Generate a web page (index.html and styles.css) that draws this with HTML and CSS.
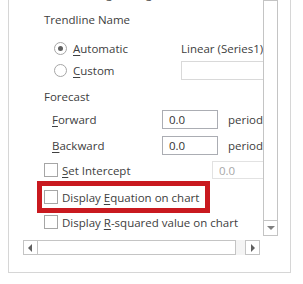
FILE: index.html
```html
<!DOCTYPE html>
<html lang="en">
<head>
    <meta charset="UTF-8">
    <title>Format Trendline</title>
    <link rel="stylesheet" href="styles.css">
</head>
<body>
    <div class="pane">
        <div class="pane-body">
            <div class="viewport">
                <div class="content">
                    <div class="row row-ma">
                        <span class="radio"></span>
                        <span class="label">Moving Average</span>
                    </div>

                    <div class="row row-title">Trendline Name</div>

                    <div class="row row-auto">
                        <span class="radio checked"></span>
                        <span class="label name-label"><u>A</u>utomatic</span>
                        <span>Linear (Series1)</span>
                    </div>
                    <div class="row row-custom">
                        <span class="radio"></span>
                        <span class="label name-label"><u>C</u>ustom</span>
                        <span class="field field-wide"></span>
                    </div>

                    <div class="row row-title row-forecast">Forecast</div>

                    <div class="row row-period">
                        <span class="period-label"><u>F</u>orward</span>
                        <span class="field field-num">0.0</span>
                        <span>periods</span>
                    </div>
                    <div class="row row-period row-back">
                        <span class="period-label"><u>B</u>ackward</span>
                        <span class="field field-num">0.0</span>
                        <span>periods</span>
                    </div>

                    <div class="row row-check row-intercept">
                        <span class="check"></span>
                        <span class="label intercept-label"><u>S</u>et Intercept</span>
                        <span class="field field-off">0.0</span>
                    </div>

                    <div class="row row-check row-equation">
                        <span class="check"></span>
                        <span class="label">Display <u>E</u>quation on chart</span>
                        <span class="highlight"></span>
                    </div>

                    <div class="row row-check row-rsq">
                        <span class="check"></span>
                        <span class="label">Display <u>R</u>-squared value on chart</span>
                    </div>
                </div>
            </div>

            <div class="hscroll">
                <span class="sbtn"><span class="arrow arrow-left"></span></span>
                <span class="hthumb"></span>
                <span class="hgap"></span>
                <span class="sbtn"><span class="arrow arrow-right"></span></span>
            </div>
        </div>

        <div class="vscroll">
            <span class="vthumb"></span>
            <span class="sbtn"><span class="arrow arrow-down"></span></span>
        </div>
    </div>
</body>
</html>
```

FILE: styles.css
```css
body {
    margin: 0;
    background: #fff;
    font-family: "Open Sans", "Noto Sans", sans-serif;
    font-size: 11.5px;
    color: #404040;
}

u {
    text-decoration: underline;
    text-underline-offset: 2px;
}

/* Pane frame */
.pane {
    margin-left: 8px;
    width: 283px;
    height: 273px;
    border-left: 1px solid #d6d6d6;
    border-right: 1px solid #d6d6d6;
    border-bottom: 1px solid #d6d6d6;
    box-sizing: border-box;
    display: flex;
}

.pane-body {
    width: 254px;
    display: flex;
    flex-direction: column;
}

.viewport {
    height: 240px;
    overflow: hidden;
    position: relative;
}

.content {
    padding-left: 35px;
    margin-top: -17px;
    width: 400px;
}

/* Rows */
.row {
    display: flex;
    align-items: center;
    height: 22px;
    white-space: nowrap;
    position: relative;
}

.row-ma {
    height: 20px;
    margin-bottom: 4px;
}

.row-title {
    height: 25px;
}

.row-auto {
    margin-top: 6px;
    height: 21px;
    padding-left: 10px;
}

.row-custom {
    padding-left: 10px;
}

.row-forecast {
    margin-top: 4px;
    height: 22px;
}

.row-period {
    margin-top: 1px;
    padding-left: 8px;
}

.row-back {
    margin-top: 4px;
}

.row-intercept {
    margin-top: 3px;
}

.row-equation {
    margin-top: 5px;
}

.row-rsq {
    margin-top: 3px;
}

.label {
    margin-left: 6px;
}

.name-label {
    width: 108px;
}

.period-label {
    width: 110px;
}

.intercept-label {
    width: 150px;
}

/* Controls */
.radio {
    width: 11px;
    height: 11px;
    border: 1px solid #a6a6a6;
    border-radius: 50%;
    background: #fff;
    box-sizing: content-box;
    position: relative;
    flex: none;
}

.radio.checked::after {
    content: "";
    position: absolute;
    left: 3px;
    top: 3px;
    width: 5px;
    height: 5px;
    border-radius: 50%;
    background: #606060;
}

.row-ma .radio {
    margin-left: 10px;
}

.check {
    width: 12px;
    height: 12px;
    border: 1px solid #a6a6a6;
    background: #fff;
    flex: none;
}

.row-check .label {
    margin-left: 4px;
}

.field {
    height: 19px;
    box-sizing: border-box;
    border: 1px solid #abadb3;
    background: #fff;
    display: flex;
    align-items: center;
    padding-left: 6px;
    color: #333;
    flex: none;
}

.field-wide {
    width: 120px;
    border-color: #d9d9d9;
}

.field-num {
    width: 56px;
    margin-right: 10px;
}

.field-off {
    width: 80px;
    height: 18px;
    border-color: #e2e2e2;
    color: #a8a8a8;
}

.highlight {
    position: absolute;
    left: -7px;
    top: -5px;
    width: 173px;
    height: 32px;
    box-sizing: border-box;
    border: 5px solid #c9191f;
}

/* Scrollbars */
.hscroll {
    margin-left: 14px;
    width: 237px;
    height: 15px;
    display: flex;
}

.sbtn {
    width: 15px;
    height: 15px;
    box-sizing: border-box;
    border: 1px solid #c4c4c4;
    background: #fff;
    display: flex;
    align-items: center;
    justify-content: center;
    flex: none;
}

.hthumb {
    flex: 1;
    border: 1px solid #c4c4c4;
    border-left: none;
}

.hgap {
    width: 9px;
    background: #f4f4f4;
}

.vscroll {
    width: 15px;
    height: 236px;
    display: flex;
    flex-direction: column;
}

.vthumb {
    flex: 1;
    border: 1px solid #c4c4c4;
}

.vscroll .sbtn {
    border-top: none;
}

.arrow {
    width: 0;
    height: 0;
    border: 4px solid transparent;
}

.arrow-left {
    border-right-color: #606060;
    border-left-width: 0;
    margin-left: -1px;
}

.arrow-right {
    border-left-color: #606060;
    border-right-width: 0;
    margin-left: 1px;
}

.arrow-down {
    border-top-color: #808080;
    border-bottom-width: 0;
    border-left-width: 4px;
    border-right-width: 4px;
}
```
